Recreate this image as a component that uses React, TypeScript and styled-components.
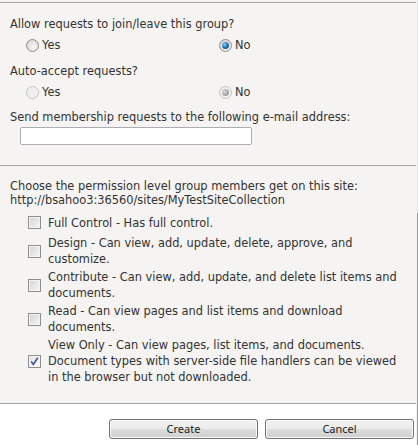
import React from "react";
import styled, { createGlobalStyle } from "styled-components";

const GlobalStyle = createGlobalStyle`
  html, body {
    margin: 0;
    padding: 0;
    background: #ffffff;
  }
  body {
    font-family: "DejaVu Sans", Verdana, sans-serif;
    font-size: 11.4px;
    color: #333333;
  }
`;

const permissions = [
  { id: "full", lines: ["Full Control - Has full control."], checked: false },
  {
    id: "design",
    lines: ["Design - Can view, add, update, delete, approve, and", "customize."],
    checked: false,
  },
  {
    id: "contribute",
    lines: ["Contribute - Can view, add, update, and delete list items and", "documents."],
    checked: false,
  },
  {
    id: "read",
    lines: ["Read - Can view pages and list items and download", "documents."],
    checked: false,
  },
  {
    id: "view",
    lines: [
      "View Only - Can view pages, list items, and documents.",
      "Document types with server-side file handlers can be viewed",
      "in the browser but not downloaded.",
    ],
    checked: true,
  },
];

function Radio({ checked, disabled }: { checked?: boolean; disabled?: boolean }) {
  return (
    <RadioCircle $disabled={disabled}>
      {checked && <RadioDot $disabled={disabled} />}
    </RadioCircle>
  );
}

function Check({ checked }: { checked?: boolean }) {
  return (
    <CheckBox $checked={checked}>
      {checked && (
        <svg width="11" height="11" viewBox="0 0 11 11">
          <path d="M2.2 5.6 L4.3 8.4 L8.8 1.8" fill="none" stroke="#3f4f9e" strokeWidth="1.6" />
        </svg>
      )}
    </CheckBox>
  );
}

export default function App() {
  return (
    <>
      <GlobalStyle />
      <Page>
        <Main>
          <Section $top>
            <Label>Allow requests to join/leave this group?</Label>
            <RadioRow>
              <Option>
                <Radio />
                <span>Yes</span>
              </Option>
              <Option>
                <Radio checked />
                <span>No</span>
              </Option>
            </RadioRow>
            <Label $gap={9}>Auto-accept requests?</Label>
            <RadioRow>
              <Option>
                <Radio disabled />
                <span>Yes</span>
              </Option>
              <Option>
                <Radio checked disabled />
                <span>No</span>
              </Option>
            </RadioRow>
            <Label $gap={8}>Send membership requests to the following e-mail address:</Label>
            <EmailInput type="text" />
          </Section>
          <Section $grow>
            <Intro>
              Choose the permission level group members get on this site:
              <br />
              http://bsahoo3:36560/sites/MyTestSiteCollection
            </Intro>
            <PermList>
              {permissions.map((p) => (
                <PermRow key={p.id}>
                  <Check checked={p.checked} />
                  <PermText>
                    {p.lines.map((l, i) => (
                      <div key={i}>{l}</div>
                    ))}
                  </PermText>
                </PermRow>
              ))}
            </PermList>
          </Section>
          <Footer>
            <Button>Create</Button>
            <Button>Cancel</Button>
          </Footer>
        </Main>
        <Edge />
      </Page>
    </>
  );
}

const Page = styled.div`
  display: flex;
  width: 419px;
  height: 445px;
  overflow: hidden;
`;

const Main = styled.div`
  width: 416px;
  display: flex;
  flex-direction: column;
  background: #f5f4f2;
  padding-top: 2px;
  box-sizing: border-box;
`;

const Edge = styled.div`
  width: 3px;
  background: linear-gradient(to right, #f5f4f2 0, #f5f4f2 1px, #ffffff 1px);
  position: relative;
  &::after {
    content: "";
    position: absolute;
    left: 1px;
    top: 0;
    width: 1px;
    height: 100%;
    background: linear-gradient(to bottom, #e2e2e2 0, #e2e2e2 213px, #9c9c9c 213px);
  }
`;

const Section = styled.div<{ $top?: boolean; $grow?: boolean }>`
  border-top: 1px solid #a3a3a3;
  padding: ${(p) => (p.$top ? "14px 0 20px 10px" : "13px 0 0 10px")};
  flex: ${(p) => (p.$grow ? "1" : "none")};
  display: flex;
  flex-direction: column;
  align-items: flex-start;
`;

const Label = styled.div<{ $gap?: number }>`
  line-height: 14px;
  margin-top: ${(p) => p.$gap ?? 0}px;
`;

const RadioRow = styled.div`
  display: grid;
  grid-template-columns: 193px 193px;
  margin: 4px 0 0 16px;
  height: 20px;
  align-items: center;
`;

const Option = styled.label`
  display: flex;
  align-items: center;
  gap: 3px;
  line-height: 14px;
`;

const RadioCircle = styled.span<{ $disabled?: boolean }>`
  width: 13px;
  height: 13px;
  box-sizing: border-box;
  border-radius: 50%;
  border: 1px solid ${(p) => (p.$disabled ? "#c4c4c4" : "#8d8d8d")};
  background: ${(p) =>
    p.$disabled
      ? "#f0f0f0"
      : "radial-gradient(circle at 60% 65%, #f8f8f8 0, #e6e6e6 45%, #cfcfcf 100%)"};
  display: flex;
  align-items: center;
  justify-content: center;
`;

const RadioDot = styled.span<{ $disabled?: boolean }>`
  width: 7px;
  height: 7px;
  border-radius: 50%;
  background: ${(p) =>
    p.$disabled
      ? "radial-gradient(circle at 35% 35%, #d8d8d8 0, #9e9e9e 70%)"
      : "radial-gradient(circle at 35% 35%, #8fd4f8 0, #2a78b4 45%, #0d3f6e 100%)"};
`;

const EmailInput = styled.input`
  margin: 3px 0 0 10px;
  width: 232px;
  height: 18px;
  box-sizing: border-box;
  border: 1px solid #abadb3;
  border-radius: 2px;
  background: #ffffff;
  padding: 0 3px;
  font: inherit;
  outline: none;
`;

const Intro = styled.div`
  line-height: 14px;
`;

const PermList = styled.div`
  margin: 5px 0 0 18px;
  display: flex;
  flex-direction: column;
  gap: 2px;
`;

const PermRow = styled.div`
  display: flex;
  align-items: center;
  gap: 7px;
  min-height: 21px;
`;

const PermText = styled.div`
  line-height: 16px;
`;

const CheckBox = styled.span<{ $checked?: boolean }>`
  flex: none;
  width: 13px;
  height: 13px;
  box-sizing: border-box;
  border: 1px solid #8f8f8f;
  box-shadow: inset 0 0 0 1px #f4f4f4;
  background: ${(p) =>
    p.$checked
      ? "linear-gradient(135deg, #e4e4e4, #fbfbfb)"
      : "linear-gradient(135deg, #d3d3d3, #f6f6f6)"};
  display: flex;
  align-items: center;
  justify-content: center;
`;

const Footer = styled.div`
  border-top: 1px solid #a3a3a3;
  background: #ffffff;
  height: 42px;
  box-sizing: border-box;
  padding: 15px 2px 0 0;
  display: flex;
  justify-content: flex-end;
  align-items: flex-start;
  gap: 7px;
`;

const Button = styled.button`
  width: 149px;
  height: 20px;
  box-sizing: border-box;
  border: 1px solid #707070;
  border-radius: 3px;
  background: linear-gradient(to bottom, #f2f2f2 0, #ebebeb 50%, #dddddd 50%, #cfcfcf 100%);
  box-shadow: inset 0 0 0 1px #fbfbfb;
  font-family: "Noto Sans", "DejaVu Sans", sans-serif;
  font-size: 11px;
  color: #222222;
  padding: 0;
  line-height: 16px;
`;
